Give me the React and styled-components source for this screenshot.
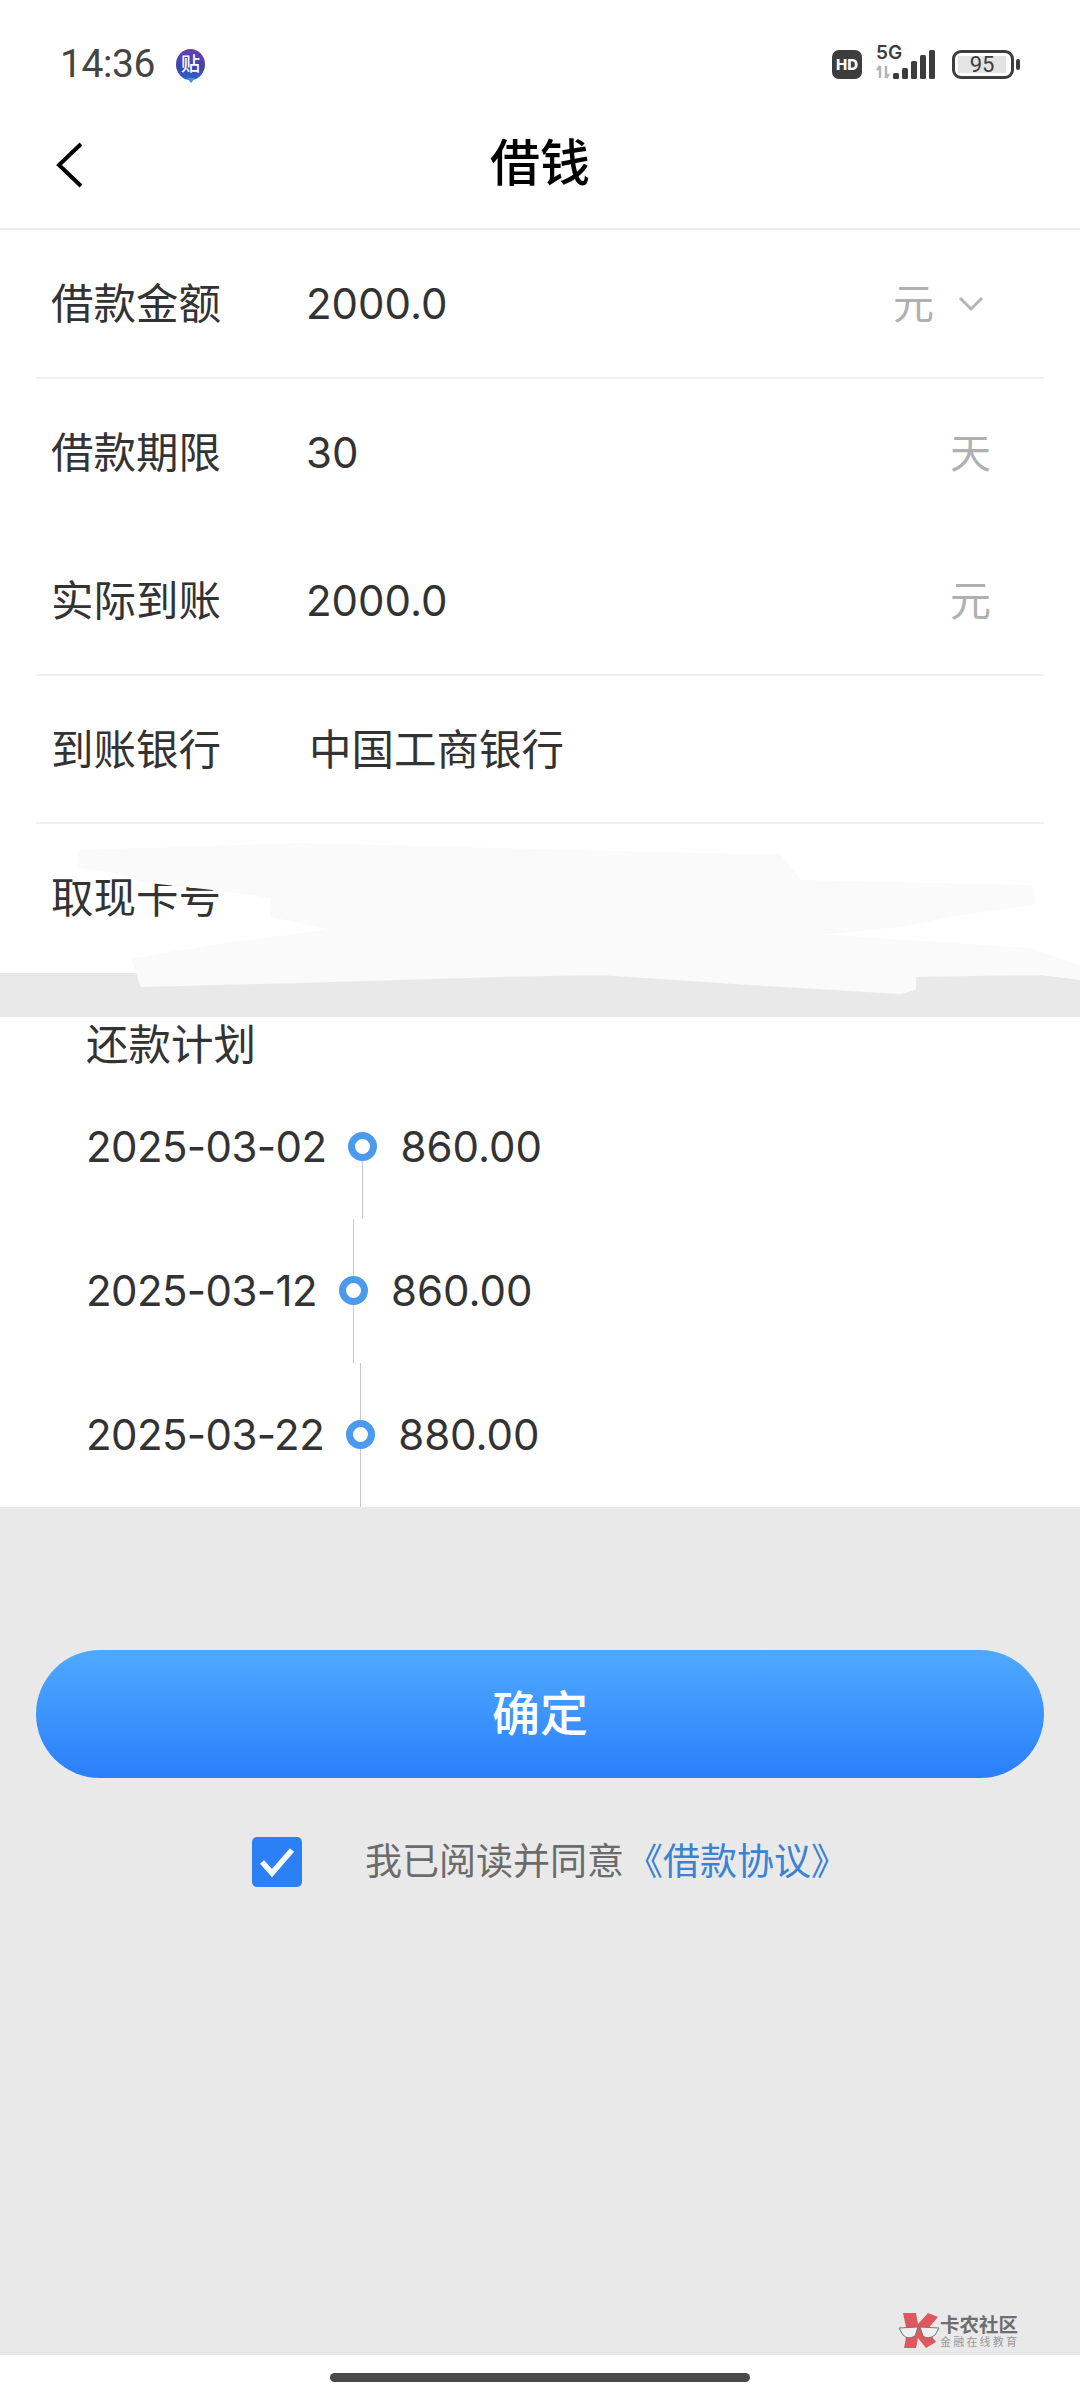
import React from "react";
import styled, { createGlobalStyle } from "styled-components";

const GlobalStyle = createGlobalStyle`
    html, body {
        margin: 0;
        padding: 0;
        background: #fff;
    }
    * {
        box-sizing: border-box;
    }
`;

const FONT = `Inter, "Noto Sans CJK SC", sans-serif`;

const Page = styled.div`
    position: relative;
    width: 1080px;
    height: 2400px;
    display: flex;
    flex-direction: column;
    background: #fff;
    color: #333;
    font-family: ${FONT};
    overflow: hidden;
`;

const StatusBar = styled.div`
    height: 110px;
    padding: 18px 60px 0;
    display: flex;
    align-items: center;
    justify-content: space-between;
`;

const StatusGroup = styled.div`
    display: flex;
    align-items: center;
`;

const Time = styled.div`
    font-family: Roboto, sans-serif;
    font-size: 39px;
    line-height: 40px;
    letter-spacing: -0.4px;
    color: #444;
`;

const NoticeBadge = styled.div`
    position: relative;
    width: 29px;
    height: 31px;
    margin-left: 21px;
    border-radius: 50%;
    background: linear-gradient(180deg, #6a3fb0, #3b46ad 60%, #2f62c8);
    color: #fff;
    font-size: 19px;
    line-height: 31px;
    text-align: center;
    font-weight: 500;

    &::after {
        content: "";
        position: absolute;
        left: 11px;
        bottom: -3px;
        border-left: 4px solid transparent;
        border-right: 4px solid transparent;
        border-top: 5px solid #3f8fe6;
    }
`;

const HdBadge = styled.div`
    width: 30px;
    height: 29px;
    border-radius: 7px;
    background: #3d3d3d;
    color: #fff;
    font-size: 15px;
    font-weight: 800;
    line-height: 29px;
    text-align: center;
`;

const SignalBox = styled.div`
    position: relative;
    width: 62px;
    height: 32px;
    margin-left: 13px;
`;

const FiveG = styled.div`
    position: absolute;
    left: 1px;
    top: -5px;
    font-size: 19px;
    line-height: 20px;
    font-weight: 600;
    color: #3d3d3d;
`;

const Battery = styled.div`
    width: 62px;
    height: 29px;
    margin-left: 15px;
    padding: 3px;
    border: 3px solid #3d3d3d;
    border-radius: 9px;
    display: flex;
`;

const BatteryLevel = styled.div`
    width: 48px;
    height: 100%;
    background: #e4e4e4;
    color: #3d3d3d;
    font-family: Roboto, sans-serif;
    font-size: 22px;
    line-height: 17px;
    text-align: center;
`;

const BatteryNub = styled.div`
    width: 4px;
    height: 11px;
    margin-left: 2px;
    border-radius: 2px;
    background: #3d3d3d;
`;

const NavBar = styled.div`
    position: relative;
    height: 120px;
    padding-bottom: 12px;
    border-bottom: 2px solid #ececec;
    display: flex;
    align-items: center;
    justify-content: center;
`;

const BackIcon = styled.svg`
    position: absolute;
    left: 55px;
    top: 32px;
    width: 30px;
    height: 46px;
`;

const NavTitle = styled.div`
    font-size: 50px;
    line-height: 60px;
    font-weight: 500;
    color: #000;
`;

const Form = styled.div`
    background: #fff;
`;

const Row = styled.div`
    height: 148.5px;
    margin: 0 36px;
    padding: 2px 15px 0 16px;
    display: flex;
    align-items: center;
    border-bottom: 2px solid ${(p) => (p.$line ? "#f0f0f0" : "transparent")};
`;

const Label = styled.div`
    width: 255px;
    margin-left: -1px;
    font-size: 42.5px;
    line-height: 50px;
    color: #333;
`;

const Value = styled.div`
    flex: 1;
    margin-left: ${(p) => (p.$cjk ? "3px" : "0")};
    font-size: ${(p) => (p.$cjk ? "42.5px" : "42px")};
    line-height: 50px;
    color: #333;
`;

const Unit = styled.div`
    font-size: 41px;
    line-height: 50px;
    color: #b0b0b0;
    margin-right: ${(p) => (p.$select ? "0" : "38px")};
`;

const Chevron = styled.svg`
    width: 26px;
    height: 16px;
    margin-left: 24px;
    margin-right: 45px;
`;

const GapStrip = styled.div`
    height: 44px;
    background: #e9e9e9;
`;

const PlanSection = styled.div`
    background: #fff;
    padding-left: 86px;
`;

const PlanTitle = styled.div`
    height: 58px;
    font-size: 42.5px;
    line-height: 56px;
    color: #333;
`;

const PlanRow = styled.div`
    height: 144px;
    display: flex;
    align-items: stretch;
`;

const PlanDate = styled.div`
    align-self: center;
    font-size: 42px;
    line-height: 50px;
    letter-spacing: -0.6px;
    color: #333;
`;

const Node = styled.div`
    width: 29px;
    margin: 0 23px 0 22px;
    display: flex;
    flex-direction: column;
    align-items: center;
`;

const NodeLine = styled.div`
    flex: 1;
    width: 1px;
    background: ${(p) => (p.$hidden ? "transparent" : "#c8c8c8")};
`;

const NodeDot = styled.div`
    width: 29px;
    height: 29px;
    border: 7px solid #4a9bee;
    border-radius: 50%;
    background: #fff;
`;

const PlanAmount = styled.div`
    align-self: center;
    font-size: 42px;
    line-height: 50px;
    color: #333;
`;

const Bottom = styled.div`
    flex: 1;
    background: #e9e9e9;
    padding-top: 143px;
`;

const ConfirmButton = styled.div`
    height: 128px;
    margin: 0 36px;
    border-radius: 64px;
    background: linear-gradient(180deg, #50a9ff, #2a7ffa);
    color: #fff;
    font-size: 48px;
    font-weight: 500;
    line-height: 128px;
    text-align: center;
`;

const Agreement = styled.div`
    margin-top: 59px;
    padding-left: 252px;
    display: flex;
    align-items: center;
`;

const CheckBox = styled.div`
    width: 50px;
    height: 50px;
    border-radius: 5px;
    background: #2a80f4;
    display: flex;
    align-items: center;
    justify-content: center;
`;

const AgreementText = styled.div`
    margin-left: 63px;
    font-size: 37px;
    line-height: 50px;
    color: #6b6b6b;
    white-space: nowrap;
`;

const AgreementLink = styled.span`
    margin-left: 2px;
    color: #3a83d4;
`;

const HomeArea = styled.div`
    height: 45px;
    background: #fff;
    display: flex;
    justify-content: center;
    padding-top: 18px;
`;

const HomeBar = styled.div`
    width: 420px;
    height: 9px;
    border-radius: 5px;
    background: #4a4a4a;
`;

const Scribble = styled.svg`
    position: absolute;
    left: 0;
    top: 840px;
    width: 1080px;
    height: 160px;
`;

const Watermark = styled.div`
    position: absolute;
    left: 898px;
    top: 2312px;
    display: flex;
    align-items: center;
`;

const WatermarkText = styled.div`
    margin-left: -2px;
    color: #6e6e6e;
`;

const WatermarkName = styled.div`
    font-size: 19.5px;
    line-height: 22px;
    font-weight: 700;
    white-space: nowrap;
`;

const WatermarkSlogan = styled.div`
    font-size: 11px;
    line-height: 13px;
    letter-spacing: 2.2px;
    color: #999;
    white-space: nowrap;
`;

const plans = [
    { date: "2025-03-02", amount: "860.00" },
    { date: "2025-03-12", amount: "860.00" },
    { date: "2025-03-22", amount: "880.00" },
];

const App = () => {
    return (
        <Page>
            <GlobalStyle />
            <StatusBar>
                <StatusGroup>
                    <Time>14:36</Time>
                    <NoticeBadge>贴</NoticeBadge>
                </StatusGroup>
                <StatusGroup>
                    <HdBadge>HD</HdBadge>
                    <SignalBox>
                        <FiveG>5G</FiveG>
                        <svg width="62" height="32" viewBox="0 0 62 32">
                            <path d="M5 18v12M5 18l-3 4M11 18v12M11 30l3-4" stroke="#b5b5b5" strokeWidth="2.5" fill="none" />
                            <rect x="18" y="25" width="6" height="6" rx="1.5" fill="#3d3d3d" />
                            <rect x="27" y="20" width="6" height="11" rx="1.5" fill="#3d3d3d" />
                            <rect x="36" y="13" width="6" height="18" rx="1.5" fill="#3d3d3d" />
                            <rect x="45" y="7" width="6" height="24" rx="1.5" fill="#3d3d3d" />
                            <rect x="54" y="2" width="6" height="29" rx="1.5" fill="#3d3d3d" />
                        </svg>
                    </SignalBox>
                    <Battery>
                        <BatteryLevel>95</BatteryLevel>
                    </Battery>
                    <BatteryNub />
                </StatusGroup>
            </StatusBar>

            <NavBar>
                <BackIcon viewBox="0 0 30 46">
                    <path d="M26 2 L4 23 L26 44" stroke="#000" strokeWidth="4" fill="none" />
                </BackIcon>
                <NavTitle>借钱</NavTitle>
            </NavBar>

            <Form>
                <Row $line>
                    <Label>借款金额</Label>
                    <Value>2000.0</Value>
                    <Unit $select>元</Unit>
                    <Chevron viewBox="0 0 26 16">
                        <path d="M2 2 L13 13 L24 2" stroke="#b5b5b5" strokeWidth="3" fill="none" />
                    </Chevron>
                </Row>
                <Row>
                    <Label>借款期限</Label>
                    <Value>30</Value>
                    <Unit>天</Unit>
                </Row>
                <Row $line>
                    <Label>实际到账</Label>
                    <Value>2000.0</Value>
                    <Unit>元</Unit>
                </Row>
                <Row $line>
                    <Label>到账银行</Label>
                    <Value $cjk>中国工商银行</Value>
                </Row>
                <Row>
                    <Label>取现卡号</Label>
                </Row>
            </Form>

            <GapStrip />

            <PlanSection>
                <PlanTitle>还款计划</PlanTitle>
                {plans.map((plan, i) => (
                    <PlanRow key={plan.date}>
                        <PlanDate>{plan.date}</PlanDate>
                        <Node>
                            <NodeLine $hidden={i === 0} />
                            <NodeDot />
                            <NodeLine />
                        </Node>
                        <PlanAmount>{plan.amount}</PlanAmount>
                    </PlanRow>
                ))}
            </PlanSection>

            <Bottom>
                <ConfirmButton>确定</ConfirmButton>
                <Agreement>
                    <CheckBox>
                        <svg width="38" height="32" viewBox="0 0 38 32">
                            <path d="M4 16 L14 27 L34 4" stroke="#fff" strokeWidth="5.5" fill="none" />
                        </svg>
                    </CheckBox>
                    <AgreementText>
                        我已阅读并同意
                        <AgreementLink>《借款协议》</AgreementLink>
                    </AgreementText>
                </Agreement>
            </Bottom>

            <HomeArea>
                <HomeBar />
            </HomeArea>

            <Scribble viewBox="0 840 1080 160">
                <path
                    d="M80 852 L300 845 L780 857 L800 882 L1030 887 L1033 903 L950 915 L900 925 L800 935 L1030 950 L1080 967 L1080 978 L1040 973 L914 975 L914 988 L900 992 L750 983 L600 973 L500 975 L300 981 L142 985 L134 960 L225 945 L340 930 L272 915 L272 896 L222 889 L140 880 L133 874 L80 866 Z"
                    fill="#fafafa"
                    stroke="#fafafa"
                    strokeWidth="4"
                    strokeLinejoin="round"
                />
            </Scribble>

            <Watermark>
                <svg width="44" height="38" viewBox="0 0 44 38">
                    <path d="M5 1 L18 1 L20 12 L30 1 L40 5 L29 18 L38 30 L28 36 L20 26 L18 36 L6 36 L9 20 Z" fill="#e0585f" />
                    <path d="M1 16 L20 15 L17 24 Q10 28 5 23 Z" fill="#efefef" stroke="#777" strokeWidth="1" />
                    <path d="M22 15 L41 16 L37 23 Q30 28 25 24 Z" fill="#efefef" stroke="#777" strokeWidth="1" />
                </svg>
                <WatermarkText>
                    <WatermarkName>卡农社区</WatermarkName>
                    <WatermarkSlogan>金融在线教育</WatermarkSlogan>
                </WatermarkText>
            </Watermark>
        </Page>
    );
};

export default App;
